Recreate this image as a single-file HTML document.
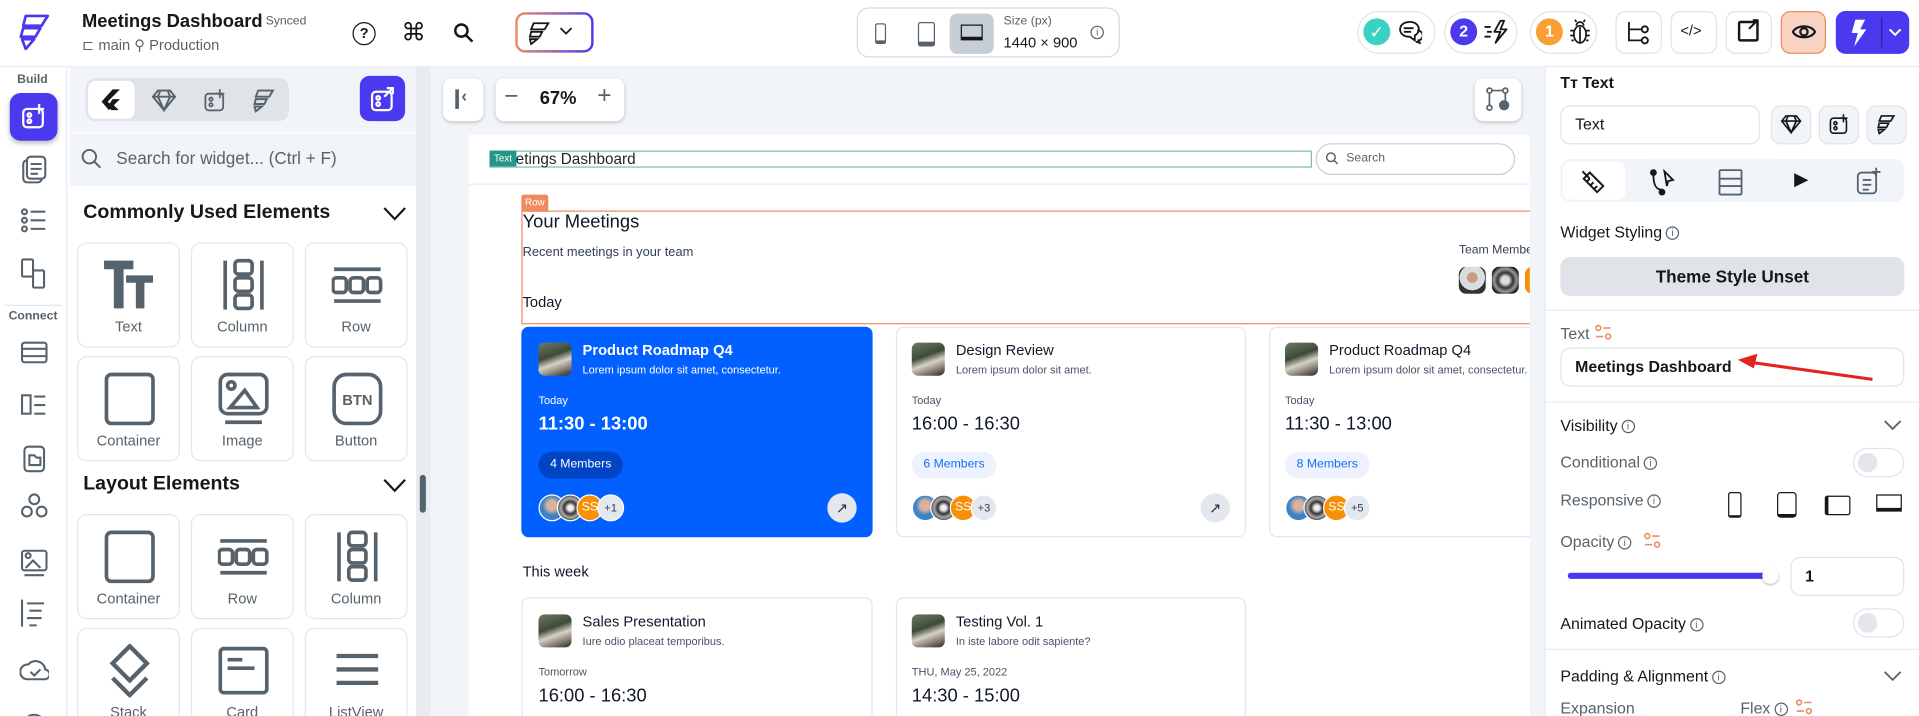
<!DOCTYPE html>
<html><head><meta charset="utf-8"><style>
*{box-sizing:border-box;margin:0;padding:0}
html,body{width:1919px;height:716px;overflow:hidden;background:#fff;font-family:"Liberation Sans",sans-serif;color:#14181b}
#w{position:absolute;left:0;top:0;width:1568px;height:585px;transform:scale(1.22385);transform-origin:0 0;overflow:hidden;background:#fff}
.a{position:absolute}
.t{position:absolute;white-space:nowrap}
.ic{position:absolute}
.tile{position:absolute;width:84px;height:86px;border:1px solid #e3e6ea;border-radius:8px;background:#fff}
.tile .l{position:absolute;left:0;right:0;bottom:9px;text-align:center;font-size:12px;color:#57636c}
.tile svg{position:absolute;left:21px;top:12px}
.card{position:absolute;border:1px solid #e3e6ea;border-radius:6px;background:#fff}
.img{position:absolute;width:27px;height:27px;border-radius:5px;background:linear-gradient(160deg,#6f7d63 0%,#3c4a3a 40%,#d8d2c4 60%,#2a2420 100%)}
.av{position:absolute;width:22px;height:22px;border-radius:50%;border:1px solid #fff}
.sq{position:absolute;width:38px;height:35px;border:1px solid #e0e3e7;border-radius:8px;background:#fff}
.pill{position:absolute;height:35px;border:1px solid #e0e3e7;border-radius:18px;background:#fff}
.lbl{font-size:13px;color:#57636c}
.tog{position:absolute;width:42px;height:24px;border:1px solid #e0e3e7;border-radius:12px;background:#fff}
.tog:after{content:"";position:absolute;left:3px;top:3px;width:16px;height:16px;border-radius:50%;background:#e3e6ea}
.info{display:inline-block;width:11px;height:11px;border:1px solid #57636c;border-radius:50%;font-size:8px;line-height:9px;text-align:center;vertical-align:1px;margin-left:3px;color:#57636c}
</style></head><body><div id="w">

<!-- top bar -->
<div class="a" style="left:0;top:0;width:1568px;height:55px;background:#fff;border-bottom:1px solid #e8ebef"></div>
<svg class="ic" style="left:15px;top:11px" width="26" height="30" viewBox="0 0 26 30" fill="none" stroke="#4b39ef" stroke-width="2.2" stroke-linejoin="round"><path d="M6 2h18l-5 8H4zM4 12h14l-4 7H2zM3 21h10l-7 8z"/></svg>
<div class="t" style="left:67px;top:9px;font-size:15px;font-weight:bold">Meetings Dashboard</div>
<div class="t" style="left:217px;top:12px;font-size:10px;color:#57636c">Synced</div>
<div class="t" style="left:67px;top:30px;font-size:12px;color:#57636c">⊏ main ⚲ Production</div>
<div class="a" style="left:288px;top:18px;width:19px;height:19px;border:1.6px solid #14181b;border-radius:50%;font-size:12px;text-align:center;line-height:16px;font-weight:bold">?</div>
<div class="t" style="left:328px;top:14px;font-size:20px">⌘</div>
<svg class="ic" style="left:370px;top:18px" width="17" height="17" viewBox="0 0 17 17" fill="none" stroke="#14181b" stroke-width="2"><circle cx="7" cy="7" r="5"/><path d="M11 11l5 5"/></svg>
<div class="a" style="left:421px;top:10px;width:64px;height:33px;border-radius:8px;background:linear-gradient(90deg,#ee8b60,#4b39ef);padding:2px"><div style="width:100%;height:100%;background:#fff;border-radius:6px"></div></div>
<svg class="ic" style="left:431px;top:17px" width="20" height="20" viewBox="0 0 20 20" fill="none" stroke="#14181b" stroke-width="1.5"><path d="M5 2h12l-3 5H3zM3 9h9l-2 4H2zM2 15h6l-5 4z"/></svg>
<svg class="ic" style="left:457px;top:22px" width="11" height="7" viewBox="0 0 11 7" fill="none" stroke="#14181b" stroke-width="1.4"><path d="M1 1l4.5 4.5L10 1"/></svg>

<div class="a" style="left:700px;top:6px;width:215px;height:41px;border:1px solid #d5dae0;border-radius:10px"></div>
<div class="a" style="left:715px;top:19px;width:9px;height:17px;border:1.5px solid #57636c;border-radius:2px;border-bottom-width:3px"></div>
<div class="a" style="left:750px;top:18px;width:14px;height:20px;border:1.5px solid #57636c;border-radius:2px;border-bottom-width:4px"></div>
<div class="a" style="left:776px;top:11px;width:36px;height:33px;background:#c8ced6;border-radius:6px"></div>
<div class="a" style="left:785px;top:20px;width:18px;height:13px;border:1.5px solid #14181b;border-bottom-width:3px"></div>
<div class="t" style="left:820px;top:12px;font-size:10px;color:#57636c">Size (px)</div>
<div class="t" style="left:820px;top:28px;font-size:12px">1440 × 900</div>
<div class="a" style="left:891px;top:21px;width:11px;height:11px;border:1px solid #57636c;border-radius:50%;font-size:8px;text-align:center;line-height:9px;color:#57636c">i</div>

<div class="pill" style="left:1109px;top:9px;width:64px"></div>
<div class="a" style="left:1114px;top:15px;width:22px;height:22px;border-radius:50%;background:#39d2c0;color:#fff;font-size:14px;text-align:center;line-height:22px">✓</div>
<svg class="ic" style="left:1142px;top:16px" width="20" height="20" viewBox="0 0 20 20" fill="none" stroke="#14181b" stroke-width="1.5"><path d="M9 2a7 6 0 1 0 0 12h1l4 3v-4a7 6 0 0 0-5-11z"/><path d="M5 7h8M5 10h6"/><path d="M16 9a4 4 0 0 1 1 8l1 2-3-1"/></svg>
<div class="pill" style="left:1180px;top:9px;width:60px"></div>
<div class="a" style="left:1185px;top:15px;width:22px;height:22px;border-radius:50%;background:#4b39ef;color:#fff;font-size:13px;font-weight:bold;text-align:center;line-height:22px">2</div>
<svg class="ic" style="left:1212px;top:16px" width="22" height="20" viewBox="0 0 22 20" fill="none" stroke="#14181b" stroke-width="1.5" stroke-linejoin="round"><path d="M14 1l-5 9h5l-4 9 9-11h-5l3-7z"/><path d="M1 6h5M3 10h4M1 14h5"/></svg>
<div class="pill" style="left:1250px;top:9px;width:55px"></div>
<div class="a" style="left:1255px;top:15px;width:22px;height:22px;border-radius:50%;background:#f9a035;color:#fff;font-size:13px;font-weight:bold;text-align:center;line-height:22px">1</div>
<svg class="ic" style="left:1282px;top:15px" width="18" height="22" viewBox="0 0 18 22" fill="none" stroke="#14181b" stroke-width="1.4"><ellipse cx="9" cy="13" rx="5" ry="7"/><path d="M6 6a3 3 0 0 1 6 0M9 7v13M4 10H1M4 14H1M4 18H2M14 10h3M14 14h3M14 18h2M6 3L5 1M12 3l1-2"/></svg>
<div class="sq" style="left:1320px;top:9px"></div>
<svg class="ic" style="left:1329px;top:17px" width="20" height="20" viewBox="0 0 20 20" fill="none" stroke="#14181b" stroke-width="1.5"><path d="M2 1v15h10M2 7h10"/><circle cx="15" cy="7" r="2.5"/><circle cx="15" cy="16" r="2.5"/></svg>
<div class="sq" style="left:1365px;top:9px"></div><div class="t" style="left:1373px;top:18px;font-size:12px">&lt;/&gt;</div>
<div class="sq" style="left:1410px;top:9px"></div><div class="a" style="left:1420px;top:17px;width:17px;height:17px;border:2px solid #14181b;border-radius:2px"></div><div class="t" style="left:1427px;top:11px;font-size:14px;font-weight:bold">↗</div>
<div class="a" style="left:1455px;top:9px;width:37px;height:35px;border:1.5px solid #ee8b60;border-radius:8px;background:#f8d3c2"></div>
<svg class="ic" style="left:1464px;top:19px" width="20" height="14" viewBox="0 0 20 14" fill="none" stroke="#14181b" stroke-width="1.8"><path d="M1 7C4 1 16 1 19 7C16 13 4 13 1 7z"/><circle cx="10" cy="7" r="3"/></svg>
<div class="a" style="left:1500px;top:9px;width:60px;height:35px;border-radius:8px;background:#4b39ef"></div>
<div class="a" style="left:1537px;top:14px;width:1px;height:25px;background:#2a1fa0"></div>
<svg class="ic" style="left:1512px;top:16px" width="14" height="22" viewBox="0 0 14 22"><path d="M4 0h8L8 8h5L3 22l3-11H1z" fill="#fff"/></svg>
<svg class="ic" style="left:1543px;top:23px" width="11" height="7" viewBox="0 0 11 7" fill="none" stroke="#fff" stroke-width="1.6"><path d="M1 1l4.5 4.5L10 1"/></svg>

<!-- left rail -->
<div class="a" style="left:0;top:55px;width:55px;height:530px;background:#fff;border-right:1px solid #e8ebef"></div>
<div class="t" style="left:14px;top:60px;font-size:10px;font-weight:bold;color:#57636c">Build</div>
<div class="a" style="left:8px;top:76px;width:39px;height:39px;border-radius:9px;background:#4b39ef;box-shadow:0 2px 4px rgba(0,0,0,.25)"></div>
<svg class="ic" style="left:17px;top:84px" width="22" height="22" viewBox="0 0 22 22" fill="none" stroke="#fff" stroke-width="1.8"><rect x="2" y="5" width="16" height="15" rx="3"/><circle cx="7" cy="10" r="1.5"/><circle cx="7" cy="15" r="1.5"/><path d="M15 1v8M11 5h8"/></svg>
<svg class="ic" style="left:16px;top:127px" width="24" height="480" viewBox="0 0 24 480" fill="none" stroke="#57636c" stroke-width="1.7">
<rect x="3" y="4" width="15" height="18" rx="3"/><rect x="6" y="1" width="15" height="18" rx="3" fill="#fff"/><path d="M9 7h9M9 11h9M9 15h6"/>
<circle cx="4" cy="46" r="2"/><circle cx="4" cy="53" r="2"/><circle cx="4" cy="60" r="2"/><path d="M9 46h12M9 53h12M9 60h12"/>
<rect x="2" y="85" width="9" height="14" rx="1"/><rect x="11" y="94" width="9" height="14" rx="1"/>
<rect x="2" y="153" width="20" height="16" rx="2"/><path d="M2 158h20M2 164h20"/>
<rect x="2" y="196" width="7" height="15"/><path d="M12 197h9M12 204h9M12 211h9"/>
<rect x="4" y="238" width="16" height="20" rx="3"/><path d="M8 245h4l2 2h3v6H8z"/>
<circle cx="12" cy="281" r="4"/><circle cx="6" cy="291" r="4"/><circle cx="18" cy="291" r="4"/>
<rect x="2" y="323" width="20" height="16" rx="2"/><circle cx="7" cy="327" r="2"/><path d="M5 337l6-6 6 6M4 343h16"/>
<path d="M2 363v22M6 366h14M8 372h10M6 378h12M8 384h6"/>
<path d="M6 428a6 6 0 0 1 1-12 8 8 0 0 1 14 4 4 4 0 0 1-1 8z"/><path d="M9 422l3 3 5-5"/>
<path d="M3 465a9 9 0 0 1 17-3"/>
</svg>
<div class="a" style="left:4px;top:249px;width:47px;height:1px;background:#e0e3e7"></div>
<div class="t" style="left:7px;top:253px;font-size:10px;font-weight:bold;color:#57636c">Connect</div>

<!-- left panel -->
<div class="a" style="left:57px;top:55px;width:283px;height:97px;background:#f1f4f8"></div>
<div class="a" style="left:70px;top:64px;width:166px;height:35px;background:#e0e3e7;border-radius:8px"></div>
<div class="a" style="left:72px;top:66px;width:38px;height:31px;background:#fff;border-radius:6px"></div>
<svg class="ic" style="left:82px;top:72px" width="18" height="20" viewBox="0 0 18 20"><path d="M10 1h6L6 11l4 4 -3 3 -6-7z" fill="#14181b"/><path d="M10 9h6l-5 5 4 4h-6l-3-3z" fill="#14181b"/></svg>
<svg class="ic" style="left:124px;top:72px" width="20" height="20" viewBox="0 0 20 20" fill="none" stroke="#57636c" stroke-width="1.6"><path d="M5 2h10l4 5-9 11L1 7zM1 7h18M7 2l-2 5 5 11 5-11-2-5"/></svg>
<svg class="ic" style="left:166px;top:71px" width="20" height="22" viewBox="0 0 22 22" fill="none" stroke="#57636c" stroke-width="1.6"><rect x="2" y="5" width="16" height="15" rx="3"/><circle cx="7" cy="10" r="1.5"/><circle cx="7" cy="15" r="1.5"/><path d="M15 1v8M11 5h8"/></svg>
<svg class="ic" style="left:206px;top:72px" width="20" height="20" viewBox="0 0 20 20" fill="none" stroke="#57636c" stroke-width="1.6"><path d="M5 2h12l-3 5H3zM3 9h9l-2 4H2zM2 15h6l-5 4z"/></svg>
<div class="a" style="left:294px;top:62px;width:37px;height:37px;border-radius:8px;background:#4b39ef"></div>
<svg class="ic" style="left:302px;top:70px" width="22" height="22" viewBox="0 0 22 22" fill="none" stroke="#fff" stroke-width="1.8"><rect x="2" y="5" width="16" height="15" rx="3"/><circle cx="7" cy="10" r="1.5"/><circle cx="7" cy="15" r="1.5"/><path d="M12 9l7-7M14 2h5v5"/></svg>
<div class="a" style="left:57px;top:108px;width:283px;height:1px;background:#fff"></div>
<svg class="ic" style="left:66px;top:121px" width="17" height="17" viewBox="0 0 17 17" fill="none" stroke="#57636c" stroke-width="1.6"><circle cx="7" cy="7" r="5.5"/><path d="M11 11l5 5"/></svg>
<div class="t" style="left:95px;top:121px;font-size:14px;color:#57636c">Search for widget... (Ctrl + F)</div>
<div class="t" style="left:68px;top:165px;font-size:16px;font-weight:bold">Commonly Used Elements</div>
<svg class="ic" style="left:313px;top:169px" width="19" height="12" viewBox="0 0 19 12" fill="none" stroke="#14181b" stroke-width="1.8"><path d="M1 1l8.5 9L18 1"/></svg>
<div class="t" style="left:68px;top:387px;font-size:16px;font-weight:bold">Layout Elements</div>
<svg class="ic" style="left:313px;top:391px" width="19" height="12" viewBox="0 0 19 12" fill="none" stroke="#14181b" stroke-width="1.8"><path d="M1 1l8.5 9L18 1"/></svg>

<div class="tile" style="left:63px;top:198px"><svg width="42" height="44" viewBox="0 0 42 44"><path d="M0 2h24v7h-8v32H8V9H0z M18 14h22v6h-7v21h-7V20h-8z" fill="#57636c"/></svg><div class="l">Text</div></div>
<div class="tile" style="left:156px;top:198px"><svg width="42" height="44" viewBox="0 0 42 44" fill="none" stroke="#57636c" stroke-width="3"><path d="M6 2v40M36 2v40"/><rect x="14" y="2" width="14" height="11" rx="3"/><rect x="14" y="16" width="14" height="11" rx="3"/><rect x="14" y="30" width="14" height="11" rx="3"/></svg><div class="l">Column</div></div>
<div class="tile" style="left:249px;top:198px"><svg width="42" height="44" viewBox="0 0 42 44" fill="none" stroke="#57636c" stroke-width="3"><path d="M2 9h38M2 35h38"/><rect x="1" y="16" width="11" height="12" rx="3"/><rect x="15" y="16" width="11" height="12" rx="3"/><rect x="29" y="16" width="11" height="12" rx="3"/></svg><div class="l">Row</div></div>
<div class="tile" style="left:63px;top:291px"><svg width="42" height="44" viewBox="0 0 42 44" fill="none" stroke="#57636c" stroke-width="3"><rect x="2" y="2" width="38" height="40" rx="4"/></svg><div class="l">Container</div></div>
<div class="tile" style="left:156px;top:291px"><svg width="42" height="44" viewBox="0 0 42 44" fill="none" stroke="#57636c" stroke-width="3"><rect x="2" y="2" width="38" height="32" rx="6"/><circle cx="11" cy="11" r="3"/><path d="M10 29l12-14 10 14z M6 41h30"/></svg><div class="l">Image</div></div>
<div class="tile" style="left:249px;top:291px"><svg width="42" height="44" viewBox="0 0 42 44"><rect x="2" y="2" width="38" height="40" rx="10" fill="none" stroke="#57636c" stroke-width="3"/><text x="21" y="27" font-size="12" font-weight="bold" text-anchor="middle" fill="#57636c" font-family="Liberation Sans">BTN</text></svg><div class="l">Button</div></div>
<div class="tile" style="left:63px;top:420px"><svg width="42" height="44" viewBox="0 0 42 44" fill="none" stroke="#57636c" stroke-width="3"><rect x="2" y="2" width="38" height="40" rx="4"/></svg><div class="l">Container</div></div>
<div class="tile" style="left:156px;top:420px"><svg width="42" height="44" viewBox="0 0 42 44" fill="none" stroke="#57636c" stroke-width="3"><path d="M2 9h38M2 35h38"/><rect x="1" y="16" width="11" height="12" rx="3"/><rect x="15" y="16" width="11" height="12" rx="3"/><rect x="29" y="16" width="11" height="12" rx="3"/></svg><div class="l">Row</div></div>
<div class="tile" style="left:249px;top:420px"><svg width="42" height="44" viewBox="0 0 42 44" fill="none" stroke="#57636c" stroke-width="3"><path d="M6 2v40M36 2v40"/><rect x="14" y="2" width="14" height="11" rx="3"/><rect x="14" y="16" width="14" height="11" rx="3"/><rect x="14" y="30" width="14" height="11" rx="3"/></svg><div class="l">Column</div></div>
<div class="tile" style="left:63px;top:513px"><svg width="42" height="44" viewBox="0 0 42 44" fill="none" stroke="#57636c" stroke-width="3.5"><path d="M21 2l14 14-14 14L7 16z M7 28l14 14 14-14"/></svg><div class="l">Stack</div></div>
<div class="tile" style="left:156px;top:513px"><svg width="42" height="44" viewBox="0 0 42 44" fill="none" stroke="#57636c" stroke-width="3"><rect x="2" y="4" width="38" height="36" rx="3"/><path d="M8 13h12M8 20h22"/></svg><div class="l">Card</div></div>
<div class="tile" style="left:249px;top:513px"><svg width="42" height="44" viewBox="0 0 42 44" fill="none" stroke="#57636c" stroke-width="3.5"><path d="M4 10h34M4 21h34M4 32h34"/></svg><div class="l">ListView</div></div>

<div class="a" style="left:340px;top:55px;width:12px;height:530px;background:#e8ebef"></div>
<div class="a" style="left:343px;top:388px;width:5px;height:31px;border-radius:3px;background:#57636c"></div>

<!-- canvas -->
<div class="a" style="left:352px;top:55px;width:901px;height:530px;background:#f1f4f8"></div>
<div class="a" style="left:362px;top:64px;width:33px;height:35px;background:#fff;border-radius:7px;box-shadow:0 1px 3px rgba(0,0,0,.2)"></div>
<div class="a" style="left:372px;top:73px;width:3px;height:16px;background:#57636c"></div>
<div class="t" style="left:377px;top:70px;font-size:14px;color:#57636c;font-weight:bold">‹</div>
<div class="a" style="left:405px;top:64px;width:105px;height:35px;background:#fff;border-radius:7px;box-shadow:0 1px 3px rgba(0,0,0,.2)"></div>
<div class="t" style="left:412px;top:68px;font-size:20px;color:#57636c">−</div>
<div class="t" style="left:441px;top:72px;font-size:15px;font-weight:bold">67%</div>
<div class="t" style="left:488px;top:67px;font-size:20px;color:#57636c">+</div>
<div class="a" style="left:1205px;top:64px;width:38px;height:35px;background:#fff;border-radius:7px;box-shadow:0 1px 3px rgba(0,0,0,.2)"></div>
<svg class="ic" style="left:1214px;top:71px" width="20" height="20" viewBox="0 0 20 20" fill="none" stroke="#57636c" stroke-width="1.4"><circle cx="3" cy="3" r="2"/><circle cx="16" cy="3" r="2"/><circle cx="3" cy="17" r="2"/><path d="M5 3h9M3 5v10M16 5v6"/><circle cx="15" cy="15" r="3.5" fill="#57636c"/></svg>

<div class="a" style="left:383px;top:110px;width:870px;height:475px;background:#fff"></div>
<div class="a" style="left:383px;top:150px;width:870px;height:1px;background:#e8ebef"></div>
<div class="a" style="left:400px;top:123px;width:672px;height:14px;border:1.5px solid #7cbdb0"></div>
<div class="t" style="left:404px;top:123px;font-size:12.5px;color:#1d2429">Meetings Dashboard</div>
<div class="a" style="left:400px;top:123px;width:22px;height:13px;background:#249689;color:#fff;font-size:8px;text-align:center;line-height:13px">Text</div>
<div class="a" style="left:1075px;top:117px;width:163px;height:26px;border:1px solid #c8ced6;border-radius:13px"></div>
<svg class="ic" style="left:1083px;top:124px" width="11" height="11" viewBox="0 0 11 11" fill="none" stroke="#57636c" stroke-width="1.2"><circle cx="4.5" cy="4.5" r="3.5"/><path d="M7 7l3 3"/></svg>
<div class="t" style="left:1100px;top:124px;font-size:10px;color:#57636c">Search</div>

<div class="a" style="left:426px;top:159px;width:22px;height:14px;background:#ee8b60;border-radius:2px 2px 0 0;color:#fff;font-size:8px;text-align:center;line-height:14px">Row</div>
<div class="a" style="left:426px;top:172px;width:830px;height:93px;border:1px solid #ee8b60;border-right:none"></div>
<div class="t" style="left:427px;top:173px;font-size:15px;color:#101828">Your Meetings</div>
<div class="t" style="left:427px;top:200px;font-size:10.5px;color:#344054">Recent meetings in your team</div>
<div class="t" style="left:427px;top:240px;font-size:12px;color:#101828">Today</div>
<div class="t" style="left:1192px;top:199px;font-size:10px;color:#344054">Team Members</div>
<div class="a" style="left:1192px;top:218px;width:22px;height:22px;border-radius:6px;background:radial-gradient(circle at 50% 40%,#c89b84 0 25%,#d8dde2 26% 60%,#333 61%)"></div>
<div class="a" style="left:1219px;top:218px;width:22px;height:22px;border-radius:6px;background:radial-gradient(circle,#ddd 0 20%,#333 40%,#999 60%,#111 80%)"></div>
<div class="a" style="left:1246px;top:218px;width:10px;height:22px;border-radius:6px 0 0 6px;background:#f79009"></div>

<!-- card 1 -->
<div class="a" style="left:426px;top:267px;width:287px;height:172px;background:#0160ff;border-radius:6px"></div>
<div class="img" style="left:440px;top:280px"></div>
<div class="t" style="left:476px;top:279px;font-size:12px;font-weight:bold;color:#fff">Product Roadmap Q4</div>
<div class="t" style="left:476px;top:297px;font-size:9px;color:#fff">Lorem ipsum dolor sit amet, consectetur.</div>
<div class="t" style="left:440px;top:322px;font-size:9px;color:#fff">Today</div>
<div class="t" style="left:440px;top:338px;font-size:15px;font-weight:bold;color:#fff">11:30 - 13:00</div>
<div class="a" style="left:440px;top:369px;width:69px;height:22px;border-radius:11px;background:#0045c4;color:#fff;font-size:10px;text-align:center;line-height:22px">4 Members</div>
<div class="a" style="left:676px;top:403px;width:24px;height:24px;border-radius:50%;background:#e3e8ef;color:#1d2939;font-size:12px;text-align:center;line-height:24px">↗</div>

<!-- card 2 -->
<div class="card" style="left:732px;top:267px;width:286px;height:172px"></div>
<div class="img" style="left:745px;top:280px"></div>
<div class="t" style="left:781px;top:279px;font-size:12px;color:#101828">Design Review</div>
<div class="t" style="left:781px;top:297px;font-size:9px;color:#475467">Lorem ipsum dolor sit amet.</div>
<div class="t" style="left:745px;top:322px;font-size:9px;color:#475467">Today</div>
<div class="t" style="left:745px;top:338px;font-size:15px;color:#101828">16:00 - 16:30</div>
<div class="a" style="left:745px;top:369px;width:69px;height:22px;border-radius:11px;background:#eef2ff;color:#1570ef;font-size:10px;text-align:center;line-height:22px">6 Members</div>
<div class="a" style="left:981px;top:403px;width:24px;height:24px;border-radius:50%;background:#e3e8ef;color:#1d2939;font-size:12px;text-align:center;line-height:24px">↗</div>

<!-- card 3 -->
<div class="card" style="left:1037px;top:267px;width:230px;height:172px"></div>
<div class="img" style="left:1050px;top:280px"></div>
<div class="t" style="left:1086px;top:279px;font-size:12px;color:#101828">Product Roadmap Q4</div>
<div class="t" style="left:1086px;top:297px;font-size:9px;color:#475467">Lorem ipsum dolor sit amet, consectetur.</div>
<div class="t" style="left:1050px;top:322px;font-size:9px;color:#475467">Today</div>
<div class="t" style="left:1050px;top:338px;font-size:15px;color:#101828">11:30 - 13:00</div>
<div class="a" style="left:1050px;top:369px;width:69px;height:22px;border-radius:11px;background:#eef2ff;color:#1570ef;font-size:10px;text-align:center;line-height:22px">8 Members</div>

<div class="av" style="left:440px;top:404px;background:radial-gradient(circle at 50% 40%,#d7b39c 0 25%,#3e83c9 50%)"></div>
<div class="av" style="left:455px;top:404px;background:radial-gradient(circle,#eee 0 15%,#333 35%,#aaa 55%,#222 80%)"></div>
<div class="av" style="left:471px;top:404px;background:#f79009;color:#fff;font-size:10px;line-height:20px;text-align:center">SS</div>
<div class="av" style="left:488px;top:404px;background:#e3e8ef;color:#344054;font-size:9px;line-height:20px;text-align:center">+1</div>
<div class="av" style="left:745px;top:404px;background:radial-gradient(circle at 50% 40%,#d7b39c 0 25%,#3e83c9 50%)"></div>
<div class="av" style="left:760px;top:404px;background:radial-gradient(circle,#eee 0 15%,#333 35%,#aaa 55%,#222 80%)"></div>
<div class="av" style="left:776px;top:404px;background:#f79009;color:#fff;font-size:10px;line-height:20px;text-align:center">SS</div>
<div class="av" style="left:793px;top:404px;background:#e3e8ef;color:#344054;font-size:9px;line-height:20px;text-align:center">+3</div>
<div class="av" style="left:1050px;top:404px;background:radial-gradient(circle at 50% 40%,#d7b39c 0 25%,#3e83c9 50%)"></div>
<div class="av" style="left:1065px;top:404px;background:radial-gradient(circle,#eee 0 15%,#333 35%,#aaa 55%,#222 80%)"></div>
<div class="av" style="left:1081px;top:404px;background:#f79009;color:#fff;font-size:10px;line-height:20px;text-align:center">SS</div>
<div class="av" style="left:1098px;top:404px;background:#e3e8ef;color:#344054;font-size:9px;line-height:20px;text-align:center">+5</div>

<div class="t" style="left:427px;top:460px;font-size:12px;color:#101828">This week</div>
<div class="card" style="left:426px;top:488px;width:287px;height:120px"></div>
<div class="img" style="left:440px;top:502px"></div>
<div class="t" style="left:476px;top:501px;font-size:12px;color:#101828">Sales Presentation</div>
<div class="t" style="left:476px;top:519px;font-size:9px;color:#475467">Iure odio placeat temporibus.</div>
<div class="t" style="left:440px;top:544px;font-size:9px;color:#475467">Tomorrow</div>
<div class="t" style="left:440px;top:560px;font-size:15px;color:#101828">16:00 - 16:30</div>
<div class="card" style="left:732px;top:488px;width:286px;height:120px"></div>
<div class="img" style="left:745px;top:502px"></div>
<div class="t" style="left:781px;top:501px;font-size:12px;color:#101828">Testing Vol. 1</div>
<div class="t" style="left:781px;top:519px;font-size:9px;color:#475467">In iste labore odit sapiente?</div>
<div class="t" style="left:745px;top:544px;font-size:9px;color:#475467">THU, May 25, 2022</div>
<div class="t" style="left:745px;top:560px;font-size:15px;color:#101828">14:30 - 15:00</div>

<!-- right panel -->
<div class="a" style="left:1250px;top:55px;width:12px;height:530px;background:#f1f4f8"></div>
<div class="a" style="left:1262px;top:55px;width:306px;height:530px;background:#fff;border-left:1px solid #e8ebef"></div>
<div class="t" style="left:1275px;top:60px;font-size:13px;font-weight:bold">Tт Text</div>
<div class="a" style="left:1275px;top:86px;width:163px;height:32px;border:1px solid #e0e3e7;border-radius:8px"></div>
<div class="t" style="left:1287px;top:94px;font-size:13px">Text</div>
<div class="a" style="left:1447px;top:86px;width:33px;height:32px;border:1px solid #e0e3e7;border-radius:8px;background:#f1f4f8"></div>
<svg class="ic" style="left:1455px;top:93px" width="17" height="17" viewBox="0 0 20 20" fill="none" stroke="#14181b" stroke-width="1.6"><path d="M5 2h10l4 5-9 11L1 7zM1 7h18M7 2l-2 5 5 11 5-11-2-5"/></svg>
<div class="a" style="left:1486px;top:86px;width:33px;height:32px;border:1px solid #e0e3e7;border-radius:8px;background:#f1f4f8"></div>
<svg class="ic" style="left:1494px;top:92px" width="18" height="19" viewBox="0 0 22 22" fill="none" stroke="#14181b" stroke-width="1.6"><rect x="2" y="5" width="16" height="15" rx="3"/><circle cx="7" cy="10" r="1.5"/><circle cx="7" cy="15" r="1.5"/><path d="M15 1v8M11 5h8"/></svg>
<div class="a" style="left:1525px;top:86px;width:33px;height:32px;border:1px solid #e0e3e7;border-radius:8px;background:#f1f4f8"></div>
<svg class="ic" style="left:1533px;top:93px" width="17" height="17" viewBox="0 0 20 20" fill="none" stroke="#14181b" stroke-width="1.6"><path d="M5 2h12l-3 5H3zM3 9h9l-2 4H2zM2 15h6l-5 4z"/></svg>
<div class="a" style="left:1275px;top:130px;width:281px;height:35px;background:#f1f4f8;border-radius:8px"></div>
<div class="a" style="left:1277px;top:132px;width:51px;height:31px;background:#fff;border-radius:6px"></div>
<svg class="ic" style="left:1291px;top:138px" width="21" height="21" viewBox="0 0 21 21" fill="none" stroke="#14181b" stroke-width="1.6"><path d="M3 8l5-5 11 11-5 5zM6 10l2-2M9 13l2-2M12 16l2-2M2 2l6 6"/></svg>
<svg class="ic" style="left:1348px;top:138px" width="22" height="22" viewBox="0 0 22 22" fill="none" stroke="#14181b" stroke-width="1.5"><circle cx="3" cy="3" r="2" fill="#14181b"/><circle cx="10" cy="19" r="2" fill="#14181b"/><path d="M3 5c0 8 2 12 7 12M12 2l7 7-4 1-1 4z"/></svg>
<svg class="ic" style="left:1404px;top:138px" width="20" height="22" viewBox="0 0 20 22" fill="none" stroke="#57636c" stroke-width="1.5"><rect x="1" y="1" width="18" height="20" rx="1"/><path d="M1 8h18M1 14h18"/></svg>
<div class="t" style="left:1466px;top:137px;font-size:15px;color:#14181b">▶</div>
<svg class="ic" style="left:1517px;top:137px" width="20" height="22" viewBox="0 0 20 22" fill="none" stroke="#57636c" stroke-width="1.5"><rect x="1" y="4" width="15" height="17" rx="3"/><path d="M5 10h7M5 14h7M5 18h5M16 0v7M12.5 3.5h7"/></svg>
<div class="t" style="left:1275px;top:182px;font-size:13px">Widget Styling<span class="info">i</span></div>
<div class="a" style="left:1275px;top:210px;width:281px;height:32px;background:#e0e3e7;border-radius:8px;text-align:center;line-height:32px;font-size:14px;font-weight:bold">Theme Style Unset</div>
<div class="a" style="left:1262px;top:253px;width:306px;height:1px;background:#e8ebef"></div>
<div class="t lbl" style="left:1275px;top:265px">Text</div>
<svg class="ic" style="left:1303px;top:265px" width="14" height="14" viewBox="0 0 14 14" fill="none" stroke="#ee8b60" stroke-width="1.3"><circle cx="3" cy="3" r="2"/><path d="M7 3h6M1 10h6"/><circle cx="11" cy="10" r="2"/></svg>
<div class="a" style="left:1275px;top:284px;width:281px;height:32px;border:1px solid #e0e3e7;border-radius:8px"></div>
<div class="t" style="left:1287px;top:292px;font-size:13px;font-weight:bold">Meetings Dashboard</div>
<svg class="ic" style="left:1418px;top:288px" width="115" height="26" viewBox="0 0 115 26"><path d="M12 8L112 22" stroke="#e52222" stroke-width="2.5" fill="none"/><path d="M2 6l16-5-3 12z" fill="#e52222"/></svg>
<div class="a" style="left:1262px;top:328px;width:306px;height:1px;background:#e8ebef"></div>
<div class="t" style="left:1275px;top:340px;font-size:13px">Visibility<span class="info">i</span></div>
<svg class="ic" style="left:1539px;top:343px" width="15" height="9" viewBox="0 0 15 9" fill="none" stroke="#57636c" stroke-width="1.5"><path d="M1 1l6.5 6.5L14 1"/></svg>
<div class="t lbl" style="left:1275px;top:370px">Conditional<span class="info">i</span></div>
<div class="tog" style="left:1514px;top:366px"></div>
<div class="t lbl" style="left:1275px;top:401px">Responsive<span class="info">i</span></div>
<div class="a" style="left:1412px;top:402px;width:11px;height:21px;border:1.5px solid #14181b;border-radius:2px;border-bottom-width:2.5px"></div>
<div class="a" style="left:1452px;top:402px;width:16px;height:21px;border:1.5px solid #14181b;border-radius:3px;border-bottom-width:3px"></div>
<div class="a" style="left:1491px;top:405px;width:21px;height:16px;border:1.5px solid #14181b;border-radius:2px;border-left-width:3px"></div>
<div class="a" style="left:1533px;top:404px;width:21px;height:14px;border:1px solid #14181b;border-bottom-width:3px"></div>
<div class="t lbl" style="left:1275px;top:435px">Opacity<span class="info">i</span></div>
<svg class="ic" style="left:1343px;top:435px" width="14" height="14" viewBox="0 0 14 14" fill="none" stroke="#ee8b60" stroke-width="1.3"><circle cx="3" cy="3" r="2"/><path d="M7 3h6M1 10h6"/><circle cx="11" cy="10" r="2"/></svg>
<div class="a" style="left:1281px;top:468px;width:163px;height:5px;border-radius:3px;background:#4b39ef"></div>
<div class="a" style="left:1440px;top:464px;width:13px;height:13px;border-radius:50%;background:#fff;box-shadow:0 1px 2px rgba(0,0,0,.3)"></div>
<div class="a" style="left:1463px;top:455px;width:93px;height:32px;border:1px solid #e0e3e7;border-radius:8px"></div>
<div class="t" style="left:1475px;top:463px;font-size:13px;font-weight:bold">1</div>
<div class="t" style="left:1275px;top:502px;font-size:13px">Animated Opacity<span class="info">i</span></div>
<div class="tog" style="left:1514px;top:497px"></div>
<div class="a" style="left:1262px;top:530px;width:306px;height:1px;background:#e8ebef"></div>
<div class="t" style="left:1275px;top:545px;font-size:13px">Padding &amp; Alignment<span class="info">i</span></div>
<svg class="ic" style="left:1539px;top:548px" width="15" height="9" viewBox="0 0 15 9" fill="none" stroke="#57636c" stroke-width="1.5"><path d="M1 1l6.5 6.5L14 1"/></svg>
<div class="t lbl" style="left:1275px;top:571px">Expansion</div>
<div class="t lbl" style="left:1422px;top:571px">Flex<span class="info">i</span></div>
<svg class="ic" style="left:1467px;top:571px" width="14" height="14" viewBox="0 0 14 14" fill="none" stroke="#ee8b60" stroke-width="1.3"><circle cx="3" cy="3" r="2"/><path d="M7 3h6M1 10h6"/><circle cx="11" cy="10" r="2"/></svg>
</div></body></html>
